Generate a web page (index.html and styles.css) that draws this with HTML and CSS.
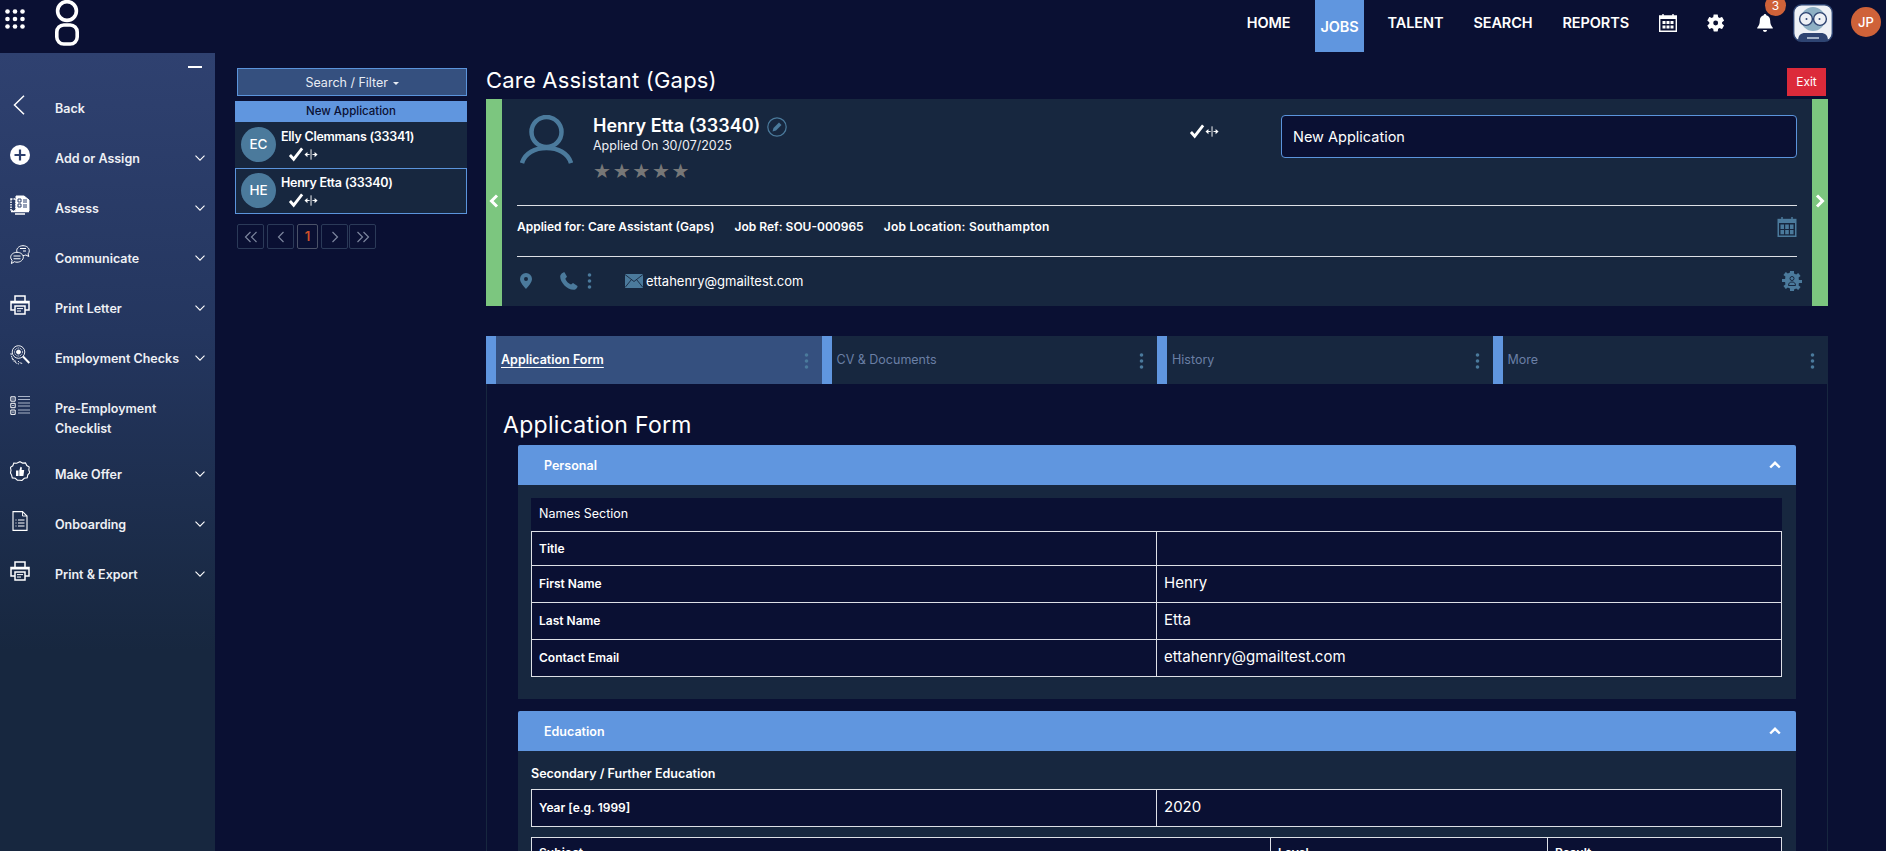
FILE: index.html
```html
<!DOCTYPE html>
<html lang="en">
<head>
<meta charset="UTF-8" />
<title>Care Assistant (Gaps)</title>
<link rel="stylesheet" href="styles.css" />
</head>
<body>
<svg class="defs" width="0" height="0">
  <symbol id="chev" viewBox="0 0 10 6"><path d="M.5.7 5 5.2 9.5.7" fill="none" stroke="currentColor" stroke-width="1.1"/></symbol>
  <symbol id="printer" viewBox="0 0 20 20"><path d="M5 6V1h10v5M5 15H1V6.500h18V15h-4" fill="none" stroke="#fff" stroke-width="1.500"/><path d="M1 6h18v2.500H1z" fill="#fff"/><path d="M5 11h10v8H5z" fill="none" stroke="#fff" stroke-width="1.500"/><path d="M7 13.600h6M7 16h4" stroke="#fff" stroke-width="1"/></symbol>
  <symbol id="tick" viewBox="0 0 32 16"><path d="M1 8.500 5 13 14 1.500" fill="none" stroke="#fff" stroke-width="3"/><path d="M23.500 2.500v11" stroke="#fff" stroke-width="1"/><path d="M16.500 8l3.200-2.800v5.600zM30.500 8l-3.200-2.800v5.600z" fill="#fff"/><path d="M19 8h3M25 8h3" stroke="#fff" stroke-width="1"/></symbol>
  <symbol id="kebab" viewBox="0 0 4 16"><circle cx="2" cy="2" r="1.800"/><circle cx="2" cy="8" r="1.800"/><circle cx="2" cy="14" r="1.800"/></symbol>
  <symbol id="up" viewBox="0 0 12 8"><path d="M1.200 6.500 6 1.800l4.800 4.700" fill="none" stroke="#fff" stroke-width="2.400"/></symbol>
  <symbol id="pg-first" viewBox="0 0 14 12"><path d="M6.500 1 1.500 6l5 5M12.500 1l-5 5 5 5" fill="none" stroke="#7c869e" stroke-width="1.200"/></symbol>
  <symbol id="pg-prev" viewBox="0 0 14 12"><path d="M9.500 1l-5 5 5 5" fill="none" stroke="#7c869e" stroke-width="1.200"/></symbol>
  <symbol id="pg-next" viewBox="0 0 14 12"><path d="M4.500 1l5 5-5 5" fill="none" stroke="#7c869e" stroke-width="1.200"/></symbol>
  <symbol id="pg-last" viewBox="0 0 14 12"><path d="M1.500 1l5 5-5 5M7.500 1l5 5-5 5" fill="none" stroke="#7c869e" stroke-width="1.200"/></symbol>
</svg>

<header class="topbar">
  <div class="brand">
    <svg class="apps" viewBox="0 0 20 20" fill="#fff"><circle cx="2.500" cy="2.500" r="2.300"/><circle cx="10" cy="2.500" r="2.300"/><circle cx="17.500" cy="2.500" r="2.300"/><circle cx="2.500" cy="10" r="2.300"/><circle cx="10" cy="10" r="2.300"/><circle cx="17.500" cy="10" r="2.300"/><circle cx="2.500" cy="17.500" r="2.300"/><circle cx="10" cy="17.500" r="2.300"/><circle cx="17.500" cy="17.500" r="2.300"/></svg>
    <svg class="logo" viewBox="0 0 24 46" fill="none" stroke="#fff" stroke-width="3.600"><circle cx="12" cy="11" r="9.400"/><rect x="1.800" y="25" width="20.400" height="19" rx="7"/></svg>
  </div>
  <nav class="topnav">
    <a href="#">HOME</a>
    <a href="#" class="active">JOBS</a>
    <a href="#">TALENT</a>
    <a href="#">SEARCH</a>
    <a href="#">REPORTS</a>
  </nav>
  <div class="tools">
    <svg class="tool" viewBox="0 0 18 18"><path d="M4 0v3M14 0v3" stroke="#fff" stroke-width="1.400"/><path d="M.7 2h16.600v15.300H.7z" fill="none" stroke="#fff" stroke-width="1.400"/><path d="M1 2h16v3H1z" fill="#fff"/><path d="M3.500 7h3v3h-3zM7.500 7h3v3h-3zM11.500 7h3v3h-3zM3.500 11.500h3v3h-3zM7.500 11.500h3v3h-3zM11.500 11.500h3v3h-3z" fill="#fff"/></svg>
    <svg class="tool" viewBox="1 1 22 22"><path fill="#fff" fill-rule="evenodd" d="M19.400 13c.04-.33.06-.66.06-1s-.02-.67-.06-1l2.200-1.700c.2-.16.25-.43.13-.66l-2.100-3.600c-.13-.23-.4-.31-.63-.23l-2.600 1.050c-.54-.41-1.120-.76-1.760-1.020L14.200 2.100c-.04-.25-.25-.43-.5-.43H9.500c-.25 0-.46.18-.5.43L8.600 4.840c-.64.26-1.220.6-1.760 1.020L4.240 4.800c-.23-.08-.5 0-.63.23l-2.100 3.600c-.13.23-.07.5.13.66L3.840 11c-.04.33-.07.67-.07 1s.03.67.07 1l-2.200 1.700c-.2.16-.26.43-.13.66l2.100 3.600c.13.23.4.31.63.23l2.600-1.050c.54.41 1.120.76 1.760 1.020L9 21.900c.04.25.25.43.5.43h4.200c.25 0 .46-.18.5-.43l.4-2.740c.64-.26 1.220-.6 1.760-1.020l2.600 1.050c.23.08.5 0 .63-.23l2.100-3.600c.13-.23.07-.5-.13-.66zM11.600 15a3 3 0 1 1 0-6 3 3 0 0 1 0 6z"/></svg>
    <div class="bell">
      <svg class="tool" viewBox="0 0 18 18"><path fill="#fff" d="M9 0c.8 0 1.300.6 1.300 1.300 2.600.6 3.900 2.800 3.900 5.400 0 3.600 1 5 2.600 7v.8H1.200v-.8c1.600-2 2.600-3.400 2.600-7 0-2.600 1.300-4.800 3.900-5.400C7.700.6 8.200 0 9 0zM7 16h4c0 1.100-.9 2-2 2s-2-.9-2-2z"/></svg>
      <span class="badge">3</span>
    </div>
    <svg class="robot" viewBox="0 0 40 38">
      <rect x=".7" y=".7" width="38.600" height="36.600" rx="8" fill="#eef1f6" stroke="#2e4472" stroke-width="1.400"/>
      <circle cx="20" cy="15" r="12" fill="#8eb0c4"/>
      <circle cx="13" cy="15" r="6.400" fill="#eef1f6" stroke="#2e4472" stroke-width="1.400"/>
      <circle cx="27" cy="15" r="6.400" fill="#eef1f6" stroke="#2e4472" stroke-width="1.400"/>
      <circle cx="13.500" cy="15" r="1" fill="#2e4472"/><circle cx="26.500" cy="15" r="1" fill="#2e4472"/>
      <path d="M5 37c0-6 3-8 7-8h16c4 0 7 2 7 8z" fill="#2e4472"/><path d="M14 34h12" stroke="#c3d0e0" stroke-width="1.600"/>
    </svg>
    <span class="user-chip">JP</span>
  </div>
</header>

<div class="shell">
  <aside class="sidebar">
    <div class="collapse"><span></span></div>
    <ul class="menu">
      <li><svg class="ic" viewBox="0 0 20 20"><path d="M14 .8 4.500 10l9.500 9.200" fill="none" stroke="#fff" stroke-width="1.500"/></svg><span>Back</span></li>
      <li><svg class="ic" viewBox="0 0 20 20"><circle cx="10" cy="10" r="10" fill="#fff"/><path d="M10 4.500v11M4.500 10h11" stroke="#2b3e6c" stroke-width="2.200"/></svg><span>Add or Assign</span><svg class="caret"><use href="#chev"/></svg></li>
      <li><svg class="ic" viewBox="0 0 20 20" fill="none" stroke="#fff"><path d="M6 1h8l5 4v11H6z" fill="#fff"/><path d="M1 4h5v12H1z" stroke-dasharray="1.500 1" stroke-width="1.500"/><path d="M8 4h3v3H8zM8 9h3v3H8zM13 5h4M13 7h4M13 10h4M13 12h4" stroke="#2b3e6c"/><path d="M1 16.500h18M5 19h10" stroke-width="1.300"/></svg><span>Assess</span><svg class="caret"><use href="#chev"/></svg></li>
      <li><svg class="ic" viewBox="0 0 20 20" stroke="#fff"><path d="M13 .7c3.500 0 6.300 2.200 6.300 5 0 1.300-.5 2.300-1.200 3.100l.7 2.700-3-1.500c-.9.4-1.800.6-2.800.6-3.500 0-6.300-2.200-6.300-4.900s2.800-5 6.300-5z" fill="none"/><path d="M7 7.300c3.500 0 6.300 2.200 6.300 4.900s-2.800 5-6.300 5c-.9 0-1.800-.2-2.600-.5l-3 1.900.7-3.400C1.200 14.600.7 13.500.7 12.200c0-2.700 2.800-4.900 6.300-4.900z" fill="#25375f"/><path d="M3.500 11h7M3.500 13.700h7M10 3.500h6M13 6h3" fill="none" stroke-width="1.100"/></svg><span>Communicate</span><svg class="caret"><use href="#chev"/></svg></li>
      <li><svg class="ic"><use href="#printer"/></svg><span>Print Letter</span><svg class="caret"><use href="#chev"/></svg></li>
      <li><svg class="ic" viewBox="0 0 20 20" fill="none" stroke="#fff" stroke-width=".9"><circle cx="8.500" cy="7" r="6.300"/><circle cx="8.500" cy="7" r="4" stroke-dasharray="1 .8"/><circle cx="8.500" cy="7" r="2" fill="#fff"/><path d="M13 11.500l6.300 6.500" stroke-width="2"/><path d="M1 8c0 4 2 7 5 8.500M2 13c1 3 3 5 7 6M8 16c1 1.500 3 2.500 5 2.500" stroke-dasharray="2 .8"/></svg><span>Employment Checks</span><svg class="caret"><use href="#chev"/></svg></li>
      <li class="tall"><svg class="ic" viewBox="0 0 20 20" fill="none" stroke="#fff"><path d="M.8 1.800h4.400v4.400H.8zM.8 8.300h4.400v4.400H.8zM.8 15h4.400v4.400H.8z" stroke-width="1"/><path d="M2.400 3.400h1.200v1.200H2.400zM2.400 9.900h1.200v1.200H2.400zM2.400 16.600h1.200v1.200H2.400z" fill="#fff" stroke="none"/><path d="M8 1.500h12M8 4.500h12M8 8h12M8 11h12M8 15h12M8 18h12" stroke="#b8c2d4" stroke-width=".9"/></svg><span>Pre-Employment<br />Checklist</span></li>
      <li><svg class="ic" viewBox="0 0 20 20" fill="none"><path d="M10 .7l2.600 1.400 2.900-.2 1.300 2.600 2.400 1.600-.4 2.900 1 2.700-2 2.100-.6 2.900-2.900.6L11.900 19.500 10 19.300l-2.600-.2-2.200-1.800-2.900-.4-.7-2.800L.5 12l.5-2.800L.4 6.400l2.400-1.600L3.800 2.100l2.900.1z" stroke="#fff" stroke-width="1.100"/><path d="M6 9.500h2.500V15H6zM9.300 9.500l1.200-3.800c1.200 0 1.500.9 1.300 2.100l-.2 1.300h2.600l-.8 5.900H9.300z" fill="#fff"/></svg><span>Make Offer</span><svg class="caret"><use href="#chev"/></svg></li>
      <li><svg class="ic" viewBox="0 0 20 20" fill="none" stroke="#fff" stroke-width="1.100"><path d="M3 .6h9.500L17 5v14.400H3z"/><path d="M12.500.6V5H17" stroke-width=".9"/><path d="M8 9h6.500M8 12h6.500M8 15h6.500M5.500 9h1M5.500 12h1M5.500 15h1" stroke-width="1.200"/></svg><span>Onboarding</span><svg class="caret"><use href="#chev"/></svg></li>
      <li><svg class="ic"><use href="#printer"/></svg><span>Print &amp; Export</span><svg class="caret"><use href="#chev"/></svg></li>
    </ul>
  </aside>

  <section class="applicants">
    <button class="filter-btn">Search / Filter <i class="drop"></i></button>
    <div class="stage-title">New Application</div>
    <div class="applicant">
      <span class="initials">EC</span>
      <div><div class="app-name">Elly Clemmans (33341)</div><svg class="tick"><use href="#tick"/></svg></div>
    </div>
    <div class="applicant selected">
      <span class="initials">HE</span>
      <div><div class="app-name">Henry Etta (33340)</div><svg class="tick"><use href="#tick"/></svg></div>
    </div>
    <div class="pager">
      <a href="#" class="wide"><svg><use href="#pg-first"/></svg></a>
      <a href="#" class="wide"><svg><use href="#pg-prev"/></svg></a>
      <a href="#" class="current">1</a>
      <a href="#" class="wide"><svg><use href="#pg-next"/></svg></a>
      <a href="#" class="wide last"><svg><use href="#pg-last"/></svg></a>
    </div>
  </section>

  <main class="main">
    <div class="title-row">
      <h1>Care Assistant (Gaps)</h1>
      <button class="exit">Exit</button>
    </div>

    <div class="candidate">
      <div class="side-bar"><svg viewBox="0 0 10 14"><path d="M8 1.500 2.500 7 8 12.500" fill="none" stroke="#fff" stroke-width="3"/></svg></div>
      <div class="cand-body">
        <div class="cand-top">
          <svg class="person" viewBox="0 0 53 50" fill="none" stroke="#4b7a9c" stroke-width="4.500"><circle cx="26.500" cy="17" r="15"/><path d="M2 48c3-10 13-15 24.500-15S48 38 51 48"/></svg>
          <div class="cand-info">
            <div class="cand-name">Henry Etta (33340)
              <svg class="edit" viewBox="0 0 20 20"><circle cx="10" cy="10" r="9.200" fill="none" stroke="#4b7a9c" stroke-width="1.200"/><path d="M5.500 14.500l1-3.500 5.500-5.500 2.500 2.500-5.500 5.500z" fill="#4b7a9c"/></svg>
            </div>
            <div class="applied">Applied On 30/07/2025</div>
            <div class="stars">★★★★★</div>
          </div>
          <svg class="tick big"><use href="#tick"/></svg>
          <div class="stage-select">New Application</div>
        </div>
        <div class="cand-job">
          <span>Applied for: Care Assistant (Gaps)</span>
          <span>Job Ref: SOU-000965</span>
          <span class="job-loc">Job Location: Southampton</span>
          <svg class="job-cal" viewBox="0 0 20 20"><path d="M5 0v3M15 0v3" stroke="#4b7a9c" stroke-width="1.500"/><path d="M.5 1.800h19V20H.5z" fill="#4b7a9c"/><path d="M2 6h16v12.500H2z" fill="#17273f"/><path d="M3.500 7.500h3.500v4.500H3.500zM8.200 7.500h3.600v4.500H8.200zM13 7.500h3.500v4.500H13zM3.500 13h3.500v4.200H3.500zM8.200 13h3.600v4.200H8.200zM13 13h3.500v4.200H13z" fill="#4b7a9c"/></svg>
        </div>
        <div class="cand-contact">
          <svg class="pin" viewBox="0 0 12 16"><path fill-rule="evenodd" fill="#4b7a9c" d="M6 0a6 6 0 0 1 6 6c0 3.500-4 7.500-6 10C4 13.500 0 9.500 0 6a6 6 0 0 1 6-6zm0 4a2 2 0 1 0 0 4 2 2 0 0 0 0-4z"/></svg>
          <svg class="phone" viewBox="0 0 18 18"><path fill="#4b7a9c" d="M4.500.2 7 4.700 5.300 6.800c.8 2.300 3.200 4.800 5.700 5.800l2-1.600 4.500 3c.3 1.500-1.700 3.800-3.700 3.800C6.500 17.800.2 10 .2 4.500.2 2.300 3 0 4.500.2z"/></svg>
          <svg class="kebab contact-kebab"><use href="#kebab"/></svg>
          <svg class="mail" viewBox="0 0 18 14"><path fill="#4b7a9c" d="M0 0h18v14H0z"/><path d="M0 .5l9 7 9-7M0 13.500l6.500-8M18 13.500l-6.500-8" fill="none" stroke="#17273f" stroke-width=".9"/></svg>
          <span class="cand-email">ettahenry@gmailtest.com</span>
          <svg class="user-gear" viewBox="0 0 20 20"><path fill="#4b7a9c" d="M8 0h4v2.500l2.200 1 2-1.500 2.400 3-2 1.500.3 2.500H20v3h-3.100l-.3 2.500 2 1.500-2.400 3-2-1.500-2.200 1V20H8v-2.500l-2.200-1-2 1.500-2.400-3 2-1.500-.3-2.500H0v-3h3.100l.3-2.500-2-1.500 2.400-3 2 1.500 2.200-1z"/><circle cx="10" cy="7.500" r="2" fill="none" stroke="#17273f" stroke-width="1"/><path d="M6.500 14.500c0-2.500 1.500-3.500 3.500-3.500s3.500 1 3.500 3.500z" fill="none" stroke="#17273f" stroke-width="1"/></svg>
        </div>
      </div>
      <div class="side-bar"><svg viewBox="0 0 10 14"><path d="M2 1.500 7.500 7 2 12.500" fill="none" stroke="#fff" stroke-width="3"/></svg></div>
    </div>

    <div class="tabs">
      <div class="tab active"><span>Application Form</span><svg class="kebab"><use href="#kebab"/></svg></div>
      <div class="tab"><span>CV &amp; Documents</span><svg class="kebab"><use href="#kebab"/></svg></div>
      <div class="tab"><span>History</span><svg class="kebab"><use href="#kebab"/></svg></div>
      <div class="tab"><span>More</span><svg class="kebab"><use href="#kebab"/></svg></div>
    </div>

    <div class="tab-pane">
      <h2>Application Form</h2>

      <div class="panel">
        <div class="panel-head"><span>Personal</span><svg class="up"><use href="#up"/></svg></div>
        <div class="panel-body personal">
          <div class="section-name">Names Section</div>
          <table class="grid two first">
            <tr class="short"><th>Title</th><td></td></tr>
            <tr><th>First Name</th><td>Henry</td></tr>
            <tr><th>Last Name</th><td>Etta</td></tr>
            <tr><th>Contact Email</th><td>ettahenry@gmailtest.com</td></tr>
          </table>
        </div>
      </div>

      <div class="panel">
        <div class="panel-head"><span>Education</span><svg class="up"><use href="#up"/></svg></div>
        <div class="panel-body">
          <div class="sub-head">Secondary / Further Education</div>
          <table class="grid two">
            <tr><th>Year [e.g. 1999]</th><td>2020</td></tr>
          </table>
          <table class="grid three">
            <tr><th>Subject</th><th>Level</th><th>Result</th></tr>
          </table>
        </div>
      </div>
    </div>
  </main>
</div>
</body>
</html>
```
FILE: styles.css
```css
html, body {
  margin: 0;
  height: 100%;
  overflow: hidden;
}

body {
  background-color: #0a1033;
  color: #fff;
  font-family: Inter, "Open Sans", sans-serif;
  font-size: 13px;
}

.defs {
  position: absolute;
}

/* top bar */
.topbar {
  display: flex;
  justify-content: space-between;
  height: 53px;
}

.brand {
  display: flex;
  align-items: flex-start;
}

.apps {
  width: 20px;
  height: 20px;
  margin: 9px 0 0 5px;
}

.logo {
  width: 24px;
  height: 46px;
  margin-left: 30px;
}

.topnav {
  display: flex;
  margin-left: auto;
}

.topnav a {
  display: flex;
  align-items: center;
  height: 44px;
  margin-right: 30px;
  color: #fff;
  font-size: 14.5px;
  font-weight: 600;
  letter-spacing: -0.1px;
  text-decoration: none;
}

.topnav a.active {
  height: 52px;
  padding: 0 5px;
  margin: 0 24px 0 -5px;
  background-color: #6096df;
}

.tools {
  display: flex;
  align-items: flex-start;
  position: relative;
  padding-right: 5px;
}

.tool {
  display: block;
  width: 18px;
  height: 18px;
  margin-top: 14px;
}

.tools > .tool {
  margin-right: 30px;
}

.bell {
  position: relative;
  margin-left: 1px;
  margin-right: 19px;
}

.badge {
  position: absolute;
  left: 9px;
  top: -5px;
  width: 21px;
  height: 21px;
  border-radius: 50%;
  background-color: #cf6239;
  font-size: 12px;
  line-height: 21px;
  text-align: center;
}

.robot {
  width: 40px;
  height: 38px;
  margin-top: 4px;
  margin-right: 18px;
}

.user-chip {
  width: 30px;
  height: 30px;
  margin-top: 7px;
  border-radius: 50%;
  background-color: #cf6239;
  font-size: 13px;
  font-weight: 500;
  line-height: 30px;
  text-align: center;
}

/* page columns */
.shell {
  display: flex;
  height: 798px;
}

.sidebar {
  flex: 0 0 215px;
  background: linear-gradient(180deg, #2f4170 0%, #24365f 35%, #17273f 75%, #17273f 100%);
}

.collapse {
  display: flex;
  justify-content: flex-end;
  height: 30px;
  padding: 13px 13px 0 0;
  box-sizing: border-box;
}

.collapse span {
  width: 14px;
  height: 2px;
  background-color: #fff;
}

.menu {
  list-style: none;
  margin: 0;
  padding: 0;
}

.menu li {
  display: flex;
  align-items: center;
  position: relative;
  height: 50px;
  padding-left: 55px;
  font-size: 12.5px;
  font-weight: 600;
  color: #eef0f5;
}

.menu li.tall {
  height: 60px;
  padding-top: 6px;
  line-height: 20px;
}

.ic {
  position: absolute;
  left: 10px;
  top: 12px;
  width: 20px;
  height: 20px;
}

.caret {
  position: absolute;
  right: 10px;
  top: 22px;
  width: 10px;
  height: 6px;
  color: #fff;
}

/* applicant list */
.applicants {
  flex: 0 0 230px;
  margin-left: 20px;
  padding-top: 15px;
}

.filter-btn {
  display: block;
  width: 230px;
  height: 28px;
  margin: 0 0 5px 2px;
  padding: 0;
  background-color: #35507f;
  border: 1px solid #5b94dc;
  color: #e8ecf4;
  font: 400 12.5px Inter, sans-serif;
}

.drop {
  display: inline-block;
  margin-left: 1px;
  vertical-align: 2px;
  border: 3px solid transparent;
  border-top-color: #e8ecf4;
  border-bottom: 0;
}

.stage-title {
  height: 21px;
  background-color: #6096df;
  color: #0a1033;
  font-size: 11.5px;
  font-weight: 500;
  line-height: 21px;
  text-align: center;
}

.applicant {
  display: flex;
  gap: 5px;
  box-sizing: border-box;
  height: 46px;
  padding: 5px 5px 0 6px;
  background-color: #17273f;
}

.applicant.selected {
  border: 1px solid #5b94dc;
  padding: 4px 4px 0 5px;
}

.initials {
  flex: 0 0 35px;
  height: 35px;
  border-radius: 50%;
  background-color: #4b7a9c;
  font-size: 13.5px;
  font-weight: 500;
  line-height: 35px;
  text-align: center;
}

.app-name {
  margin-top: 1px;
  font-size: 12.5px;
  font-weight: 600;
  letter-spacing: -0.25px;
  line-height: 18px;
}

.tick {
  display: block;
  width: 32px;
  height: 15px;
  margin: 1px 0 0 7px;
}

.pager {
  display: flex;
  gap: 3px;
  margin: 10px 0 0 2px;
}

.pager a {
  box-sizing: border-box;
  width: 21px;
  height: 25px;
  border: 1px solid #2b3a58;
  border-radius: 2px;
  text-align: center;
  text-decoration: none;
}

.pager a svg {
  display: block;
  width: 14px;
  height: 12px;
  margin: 6px auto 0;
}

.pager a.wide {
  width: 27px;
}

.pager a.last {
  margin-left: -2px;
}

.pager a.current {
  border-color: #4a5268;
  color: #d0502a;
  font-size: 13px;
  font-weight: 600;
  line-height: 23px;
}

/* main column */
.main {
  flex: 0 0 1342px;
  margin-left: 19px;
}

.title-row {
  display: flex;
  justify-content: space-between;
  align-items: flex-start;
  width: 1340px;
  height: 46px;
}

h1 {
  margin: 14px 0 0;
  font-size: 22px;
  font-weight: 400;
  letter-spacing: 0.2px;
  line-height: 26px;
}

.exit {
  width: 39px;
  height: 28px;
  margin-top: 15px;
  padding: 0 0 2px;
  background-color: #dc2a3a;
  border: 0;
  color: #fff;
  font: 400 12px Inter, sans-serif;
}

.candidate {
  display: flex;
  width: 1342px;
  height: 207px;
  background-color: #17273f;
}

.side-bar {
  display: flex;
  align-items: center;
  justify-content: center;
  flex: 0 0 16px;
  padding-bottom: 4px;
  box-sizing: border-box;
  background-color: #7cc67f;
}

.side-bar svg {
  width: 10px;
  height: 14px;
}

.cand-body {
  flex: 1;
  padding: 0 15px;
}

.cand-top {
  display: flex;
  align-items: flex-start;
  height: 106px;
  border-bottom: 1px solid #dde0e6;
  position: relative;
}

.person {
  width: 53px;
  height: 50px;
  margin: 16px 0 0 3px;
}

.cand-info {
  width: 596px;
  margin-left: 20px;
  padding-top: 15px;
}

.cand-name {
  display: flex;
  align-items: center;
  gap: 7px;
  font-size: 18px;
  font-weight: 600;
  line-height: 22px;
}

.edit {
  width: 20px;
  height: 20px;
  margin-top: 3px;
}

.applied {
  font-size: 12.5px;
  line-height: 18px;
  color: #eef0f5;
}

.stars {
  margin-top: 4px;
  color: #777;
  font-size: 20px;
  letter-spacing: 1.7px;
  line-height: 24px;
  font-family: "DejaVu Sans", sans-serif;
}

.tick.big {
  margin: 25px 60px 0 0;
}

.stage-select {
  box-sizing: border-box;
  width: 516px;
  height: 43px;
  margin-top: 16px;
  padding-left: 11px;
  background-color: #0a1033;
  border: 1px solid #5b94dc;
  border-radius: 4px;
  font-size: 14.5px;
  line-height: 41px;
}

.cand-job {
  display: flex;
  align-items: center;
  gap: 20px;
  box-sizing: border-box;
  height: 51px;
  padding-bottom: 9px;
  border-bottom: 1px solid #dde0e6;
  font-size: 12px;
  font-weight: 600;
}

.job-loc {
  letter-spacing: 0.25px;
}

.job-cal {
  width: 20px;
  height: 20px;
  margin-left: auto;
}

.cand-contact {
  display: flex;
  align-items: center;
  box-sizing: border-box;
  height: 49px;
  padding-bottom: 2px;
}

.pin {
  width: 12px;
  height: 16px;
  margin-left: 3px;
}

.phone {
  width: 18px;
  height: 18px;
  margin-left: 28px;
}

.kebab {
  width: 5px;
  height: 16px;
  fill: #4b7a9c;
}

.contact-kebab {
  margin-left: 9px;
}

.mail {
  width: 18px;
  height: 14px;
  margin-left: 33px;
}

.cand-email {
  margin-left: 3px;
  font-size: 13px;
}

.user-gear {
  width: 20px;
  height: 20px;
  margin: 0 -5px 0 auto;
}

/* tabs */
.tabs {
  display: grid;
  grid-template-columns: repeat(4, 1fr);
  width: 1342px;
  margin-top: 30px;
}

.tab {
  display: flex;
  justify-content: space-between;
  align-items: center;
  box-sizing: border-box;
  height: 48px;
  padding: 0 13px 0 5px;
  background-color: #17273f;
  border-left: 10px solid #6096df;
  color: #6a7fa5;
  font-size: 12.5px;
}

.tab span {
  margin-top: -1px;
}

.tab.active {
  background-color: #35507f;
  color: #fff;
  font-weight: 600;
}

.tab.active span {
  text-decoration: underline;
  text-underline-offset: 3px;
}

.tab .kebab {
  margin-top: 2px;
}

.tab-pane {
  box-sizing: border-box;
  width: 1342px;
  padding: 27px 31px 0;
  border: solid #17273f;
  border-width: 0 1px;
}

h2 {
  margin: 0 0 5px -15px;
  font-size: 23px;
  font-weight: 400;
  letter-spacing: 0.3px;
  line-height: 29px;
}

.panel {
  margin-bottom: 12px;
}

.panel-head {
  display: flex;
  justify-content: space-between;
  align-items: center;
  height: 40px;
  padding: 0 15px 0 26px;
  background-color: #6096df;
  border-radius: 2px 2px 0 0;
  font-size: 12.5px;
  font-weight: 600;
}

.up {
  width: 12px;
  height: 8px;
}

.panel-body {
  padding: 0 14px 0 13px;
  background-color: #17273f;
}

.panel-body.personal {
  padding-top: 13px;
  padding-bottom: 22px;
}

.section-name {
  height: 33px;
  padding-left: 8px;
  background-color: #0a1033;
  font-size: 12.5px;
  line-height: 31px;
}

.sub-head {
  height: 38px;
  font-size: 12.5px;
  font-weight: 600;
  line-height: 46px;
}

.grid {
  width: 100%;
  border-collapse: collapse;
  table-layout: fixed;
  background-color: #0a1033;
}

.grid th,
.grid td {
  box-sizing: border-box;
  height: 37px;
  padding: 0 0 0 7px;
  border: 1px solid #dde0e6;
  text-align: left;
}

.grid th {
  padding-bottom: 1px;
  font-size: 12px;
  font-weight: 600;
}

.grid td {
  padding-bottom: 3px;
  font-size: 15px;
}

.grid tr.short th,
.grid tr.short td {
  height: 34px;
}

.grid.two th {
  width: 625px;
}

.grid.three {
  margin-top: 10px;
}

.grid.three th {
  padding-bottom: 8px;
}

.grid.three th:first-child {
  width: 739px;
}

.grid.three th:nth-child(2) {
  width: 277px;
}
```
